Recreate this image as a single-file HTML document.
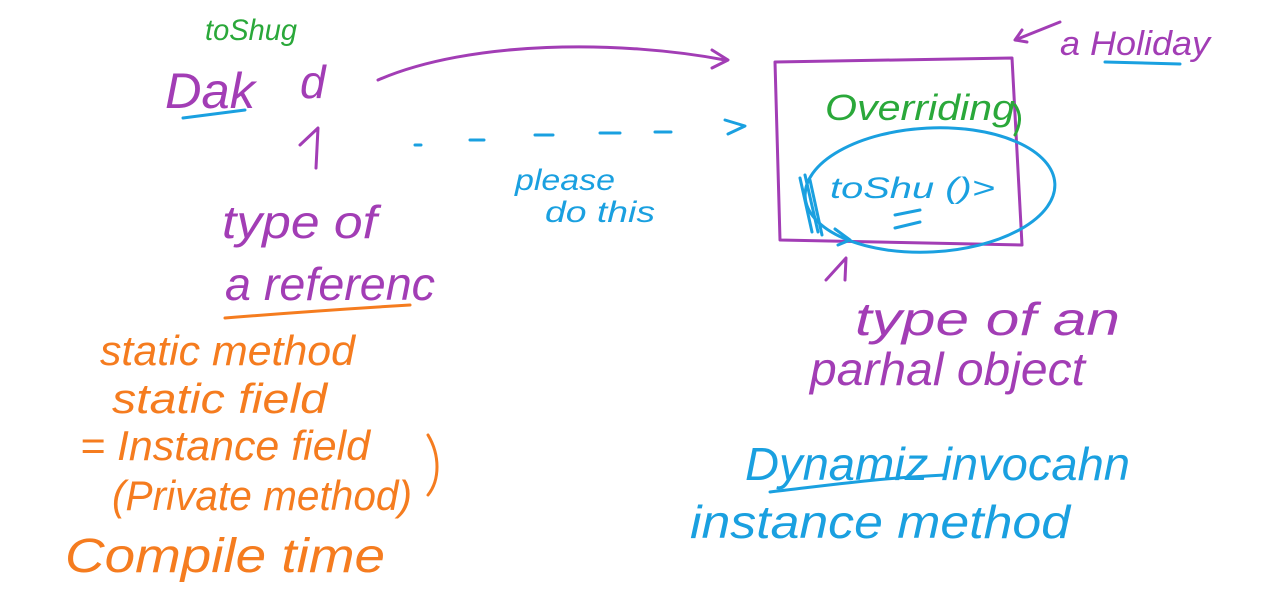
<!DOCTYPE html>
<html><head><meta charset="utf-8"><style>
html,body{margin:0;padding:0;background:#fff;width:1268px;height:590px;overflow:hidden}
svg text{font-family:"Liberation Sans",sans-serif;font-style:italic}
</style></head><body>
<svg width="1268" height="590" viewBox="0 0 1268 590" xmlns="http://www.w3.org/2000/svg" fill="none" stroke-linecap="round" stroke-linejoin="round">
<g stroke="#a23db5" stroke-width="3">
<path d="M378 80 C470 40 620 40 725 60 M712 50 L728 60 L712 68"/>
<path d="M775 62 L1012 58 L1022 245 L780 240 Z"/>
<path d="M1060 22 L1015 40 M1022 30 L1015 40 L1027 42"/>
<path d="M300 145 L318 128 L316 168"/>
<path d="M826 280 L846 258 L845 280"/>
</g>
<g stroke="#1aa0e0" stroke-width="3">
<path d="M183 118 L245 110"/>
<path d="M1105 62 L1180 64"/>
<path d="M415 145 l6 0 M470 140 l14 0 M535 135 l18 0 M600 133 l20 0 M655 132 l16 0 M725 120 L745 126 L728 134"/>
<ellipse cx="930" cy="190" rx="125" ry="62" transform="rotate(-3 930 190)"/>
<path d="M800 178 L812 232 M805 175 L818 232 M810 180 L822 235"/>
<path d="M835 229 L850 240 L838 245"/>
<path d="M895 215 L920 210 M895 228 L920 222"/>
<path d="M770 492 C830 485 880 478 945 475"/>
</g>
<path d="M1015 105 C1022 115 1020 125 1015 135" stroke="#2aa83a" stroke-width="3"/>
<path d="M225 318 C300 312 360 308 410 305" stroke="#f57c1f" stroke-width="3"/>
<path d="M428 435 C440 455 440 480 428 495" stroke="#f57c1f" stroke-width="3"/>
<g fill="#2aa83a" stroke="none" lengthAdjust="spacingAndGlyphs">
<text x="205" y="40" font-size="30" textLength="92" lengthAdjust="spacingAndGlyphs">toShug</text>
<text x="825" y="120" font-size="36" textLength="190" lengthAdjust="spacingAndGlyphs">Overriding</text>
</g>
<g fill="#a23db5" stroke="none">
<text x="165" y="108" font-size="50" textLength="90" lengthAdjust="spacingAndGlyphs">Dak</text>
<text x="300" y="98" font-size="46">d</text>
<text x="1060" y="55" font-size="34" textLength="150" lengthAdjust="spacingAndGlyphs">a Holiday</text>
<text x="222" y="238" font-size="46" textLength="155" lengthAdjust="spacingAndGlyphs">type of</text>
<text x="225" y="300" font-size="46" textLength="210" lengthAdjust="spacingAndGlyphs">a referenc</text>
<text x="855" y="335" font-size="46" textLength="265" lengthAdjust="spacingAndGlyphs">type of an</text>
<text x="810" y="385" font-size="46" textLength="275" lengthAdjust="spacingAndGlyphs">parhal object</text>
</g>
<g fill="#1aa0e0" stroke="none">
<text x="515" y="190" font-size="30" textLength="100" lengthAdjust="spacingAndGlyphs">please</text>
<text x="545" y="222" font-size="30" textLength="110" lengthAdjust="spacingAndGlyphs">do this</text>
<text x="830" y="198" font-size="30" textLength="165" lengthAdjust="spacingAndGlyphs">toShu ()&gt;</text>
<text x="745" y="480" font-size="46" textLength="385" lengthAdjust="spacingAndGlyphs">Dynamiz invocahn</text>
<text x="690" y="538" font-size="46" textLength="380" lengthAdjust="spacingAndGlyphs">instance method</text>
</g>
<g fill="#f57c1f" stroke="none">
<text x="100" y="365" font-size="42" textLength="255" lengthAdjust="spacingAndGlyphs">static method</text>
<text x="112" y="413" font-size="42" textLength="215" lengthAdjust="spacingAndGlyphs">static field</text>
<text x="80" y="460" font-size="42" textLength="290" lengthAdjust="spacingAndGlyphs">= Instance field</text>
<text x="112" y="510" font-size="42" textLength="300" lengthAdjust="spacingAndGlyphs">(Private method)</text>
<text x="65" y="572" font-size="48" textLength="320" lengthAdjust="spacingAndGlyphs">Compile time</text>
</g>
</svg>
</body></html>
